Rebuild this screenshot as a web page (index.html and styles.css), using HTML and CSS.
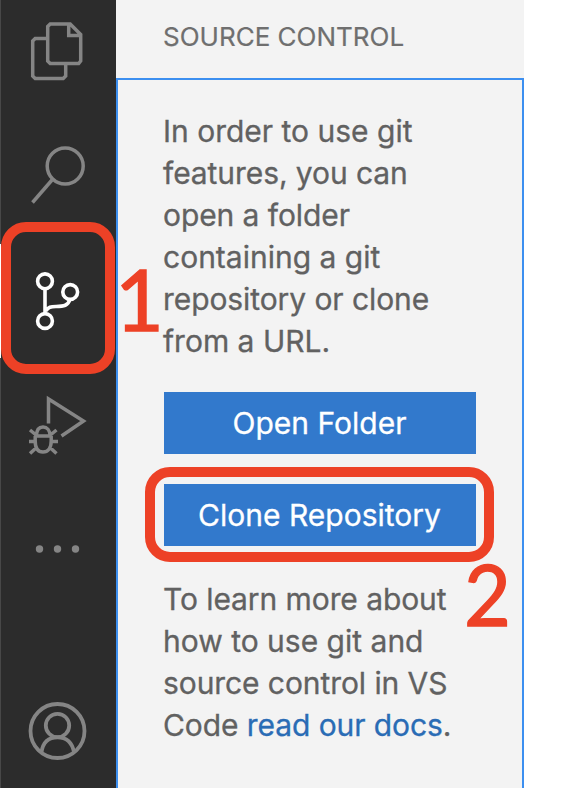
FILE: index.html
```html
<!DOCTYPE html>
<html lang="en">
<head>
<meta charset="utf-8">
<title>Source Control</title>
<link rel="stylesheet" href="styles.css">
</head>
<body>
<div class="window">
  <nav class="activity">
    <svg class="item first" viewBox="0.8 0 115 110"><path d="M47.500 38.500H35L32.500 41V76L35 78.500H63L65.500 76V65M50 24H70L80.500 34.500V61L78.500 63.500H50L47.500 61V26.500ZM68.500 24V35.500H80.500"/></svg>
    <svg class="item" viewBox="0.5 120 115 114"><circle cx="64.700" cy="166" r="18"/><path d="M51.500 180L32 202.500"/></svg>
    <svg class="item active" viewBox="0 244 115 114"><circle cx="44" cy="281.300" r="7.400"/><circle cx="69.200" cy="292" r="7.400"/><circle cx="44" cy="321" r="7.400"/><path d="M44 289V313.500M45 311C47 307 50 306.500 55 306.500C63 306.500 67 305.500 69 299.500"/></svg>
    <svg class="item" viewBox="1 368 115 114"><path d="M48.500 423.500V399L83.500 421L61.500 436"/><path d="M34 436H51M35.200 436V441C35.200 448 38 452 43 452S51.200 448 51.200 441V436M36.500 436C36.500 430 39 427 43 427S50 430 50 436M35.500 434.500L30 430M51 434.500L56.500 430M29 441.500H35M51.500 441.500H58M36 448L30 453.500M50.500 448L56.500 453.500"/></svg>
    <svg class="item dots" viewBox="0 492 115 114"><circle cx="38.500" cy="549" r="3.700"/><circle cx="56.500" cy="549" r="3.700"/><circle cx="74.500" cy="549" r="3.700"/></svg>
    <svg class="item account" viewBox="0 674 115 114"><circle cx="56.500" cy="731" r="27"/><circle cx="56.500" cy="725.500" r="11.700"/><path d="M40.500 752C42 742 48 737.300 56.500 737.300S71 742 73 752"/></svg>
  </nav>
  <main class="sidebar">
    <h1 class="title">SOURCE CONTROL</h1>
    <section class="panel">
      <p class="text"><span class="airy">In order to use git</span><br>features, you can<br>open a folder<br><span class="airy">containing a git</span><br>repository or clone<br><span class="airy">from a URL.</span></p>
      <button class="button">Open Folder</button>
      <button class="button second">Clone Repository</button>
      <p class="text last">To learn more about<br><span class="airy">how to use git and</span><br>source control in VS<br>Code <a>read our docs</a>.</p>
    </section>
  </main>
  <div class="mark mark-one"></div>
  <div class="mark mark-two"></div>
  <span class="number number-one">1</span>
  <span class="number number-two">2</span>
</div>
</body>
</html>
```
FILE: styles.css
```css
* { box-sizing: border-box; }
body { margin: 0; background: #fff; font-family: Inter, sans-serif; }
.window { position: relative; display: flex; height: 788px; overflow: hidden; }
.activity { display: flex; flex-direction: column; gap: 10px; width: 116px; background: #2c2c2c; border-left: 1px solid #484848; }
.item { display: block; width: 115px; height: 114px; flex: none; fill: none; stroke: #858585; stroke-width: 3.5; }
.first { height: 110px; }
.active { stroke: #fff; stroke-width: 3.6; margin-left: -1px; width: 116px; border-left: 1px solid #fff; }
.dots { fill: #858585; stroke: none; }
.account { margin-top: auto; stroke-width: 3.8; }
.sidebar { display: flex; flex-direction: column; width: 408px; background: #f3f3f3; }
.title { margin: 0; height: 78px; padding-left: 47px; font-size: 26px; font-weight: 400; line-height: 74px; color: #6f6f6f; white-space: nowrap; -webkit-text-stroke: .2px; }
.panel { flex: 1; border: 2px solid #3c8ff0; border-bottom: 0; padding: 30px 46px 0; }
.text { margin: 0 0 30px -1px; font-size: 30px; line-height: 42px; letter-spacing: -.08px; color: #616161; white-space: nowrap; -webkit-text-stroke: .3px; }
.text a { color: #2a6cb5; }
.airy { letter-spacing: 0; }
.button { display: block; width: 312px; height: 62px; border: 0; padding: 0 1px 0 0; background: #3279cc; color: #fff; font: 30px/62px Inter, sans-serif; white-space: nowrap; -webkit-text-stroke: .3px; }
.second { margin-top: 30px; }
.last { margin-top: 32px; }
.mark { position: absolute; border: 10px solid #ed4126; }
.mark-one { left: 1px; top: 222px; width: 114px; height: 152px; border-radius: 25px; }
.mark-two { left: 145px; top: 467px; width: 349px; height: 95px; border-radius: 25px; }
.number { position: absolute; color: #ed4126; font: 86px/88px Lato, sans-serif; -webkit-text-stroke: 1.4px #ed4126; transform-origin: 0 0; transform: scaleX(.94); }
.number-one { left: 115px; top: 254px; transform: scaleX(.98); }
.number-two { left: 464px; top: 549px; }
```
